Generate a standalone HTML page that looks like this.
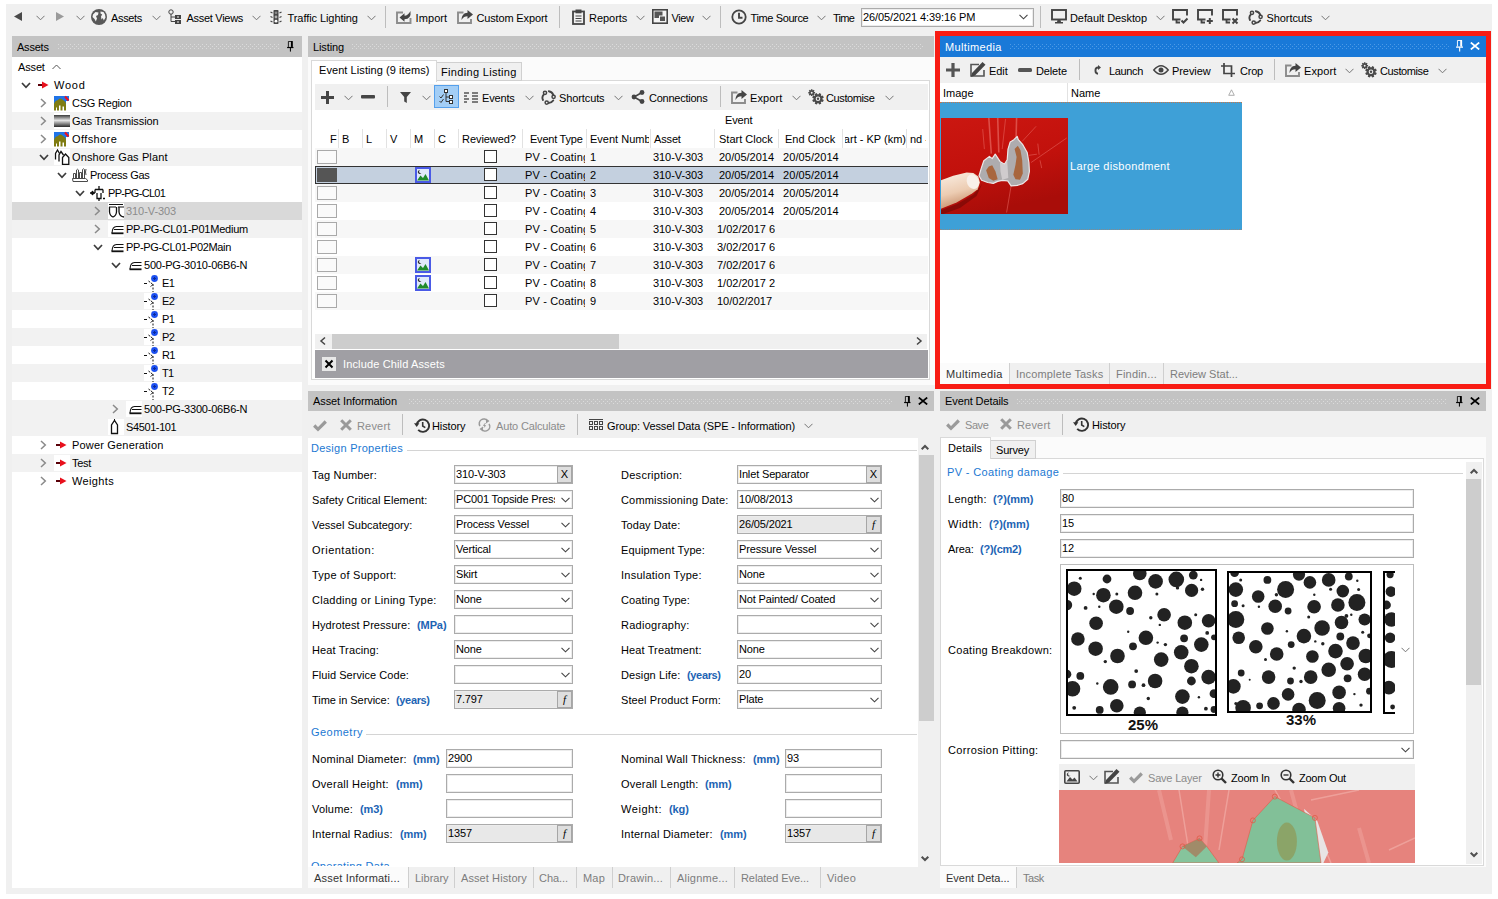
<!DOCTYPE html>
<html lang="en">
<head>
<meta charset="utf-8">
<title>Asset Inspection</title>
<style>
*{box-sizing:border-box;margin:0;padding:0}
html,body{width:1498px;height:899px;overflow:hidden;background:#fff}
body{font-family:"Liberation Sans",sans-serif;font-size:11px;color:#000;position:relative}
#app{position:absolute;left:6px;top:4px;width:1486px;height:890px;background:#f0f0f0}
.t{position:absolute;white-space:nowrap;font-size:11px;line-height:14px;letter-spacing:-.1px;color:#000}
.s{position:absolute;white-space:nowrap;font-size:11px;line-height:16px;letter-spacing:0;color:#000}
svg{position:absolute;overflow:visible}
.b{position:absolute}
.sep{position:absolute;width:1px;background:#bdbdbd}
.hdr{position:absolute;height:21px;background:#c3c3c3}
.inp{position:absolute;height:19px;background:#fff;border:1px solid #ababab;font-size:11px;line-height:17px;padding-left:1px;white-space:nowrap;overflow:hidden;letter-spacing:-.15px;box-shadow:inset 0 0 0 1px #ececec}
.inp.ro{background:#e8e8e8}
.blue{color:#1c64b4;font-weight:bold;font-size:11px}
.grp{color:#1c78d2}
.g{color:#7d7d7d}
</style>
</head>
<body>
<svg width="0" height="0">
<defs>
<pattern id="dp" width="4" height="4" patternUnits="userSpaceOnUse"><rect x="0" y="0" width="1" height="1" fill="#dbdbdb"/><rect x="2" y="2" width="1" height="1" fill="#dbdbdb"/></pattern>
<pattern id="dpb" width="4" height="4" patternUnits="userSpaceOnUse"><rect x="0" y="0" width="1" height="1" fill="#4c9ae6"/><rect x="2" y="2" width="1" height="1" fill="#4c9ae6"/></pattern>
<symbol id="chev" viewBox="0 0 9 6"><path d="M0.500 0.800 L4.500 4.800 L8.500 0.800" fill="none" stroke="#747474" stroke-width="1"/></symbol>
<symbol id="chevd" viewBox="0 0 9 6"><path d="M0.500 0.800 L4.500 4.800 L8.500 0.800" fill="none" stroke="#444" stroke-width="1.100"/></symbol>
<symbol id="tdown" viewBox="0 0 10 7"><path d="M1 1 L5 5.3 L9 1" fill="none" stroke="#3c3c3c" stroke-width="1.7"/></symbol>
<symbol id="tright" viewBox="0 0 7 10"><path d="M1 1 L5.3 5 L1 9" fill="none" stroke="#8a8a8a" stroke-width="1.5"/></symbol>
<symbol id="pin" viewBox="0 0 8 13"><path d="M1.500 7 V0.500 H6 V7" fill="none" stroke="currentColor" stroke-width="1"/><rect x="4.500" y="0" width="2" height="7" fill="currentColor"/><rect x="0" y="7" width="7.500" height="1.400" fill="currentColor"/><rect x="3.300" y="8" width="1.200" height="4.500" fill="currentColor"/></symbol>
<symbol id="xx" viewBox="0 0 10 8"><path d="M0.800 0.500 L9.200 7.500 M9.200 0.500 L0.800 7.500" fill="none" stroke="currentColor" stroke-width="1.700"/></symbol>
<symbol id="gears" viewBox="0 0 16 16"><path d="M13.23 11.14 L15.36 12.02 M11.34 13.03 L12.22 15.16 M8.66 13.03 L7.78 15.16 M6.77 11.14 L4.64 12.02 M6.77 8.46 L4.64 7.58 M8.66 6.57 L7.78 4.44 M11.34 6.57 L12.22 4.44 M13.23 8.46 L15.36 7.58" stroke="#4a4a4a" stroke-width="2.3" fill="none"/><circle cx="10.0" cy="9.8" r="3.4" fill="none" stroke="#4a4a4a" stroke-width="2.2"/><circle cx="10" cy="9.800" r="1.200" fill="#4a4a4a"/><path d="M5.20 3.70 L7.10 3.70 M4.76 4.76 L6.10 6.10 M3.70 5.20 L3.70 7.10 M2.64 4.76 L1.30 6.10 M2.20 3.70 L0.30 3.70 M2.64 2.64 L1.30 1.30 M3.70 2.20 L3.70 0.30 M4.76 2.64 L6.10 1.30" stroke="#4a4a4a" stroke-width="1.5" fill="none"/><circle cx="3.7" cy="3.7" r="1.7" fill="none" stroke="#4a4a4a" stroke-width="1.5"/></symbol>
<symbol id="imgic" viewBox="0 0 16 16"><rect x="1" y="1" width="14" height="14" fill="#dfe9fb" stroke="#4a5ae6" stroke-width="2"/><path d="M2 13.500 L5.500 8.500 L8 11 L10.500 7 L14 13.500 Z" fill="#1f8a2c"/><path d="M5 3 A2 2 0 1 0 6.500 6 A1.600 1.600 0 0 1 5 3 Z" fill="#333"/></symbol>
<symbol id="editic" viewBox="0 0 16 15"><path d="M9 2.500 H1 V14 H14 V8" fill="none" stroke="#555" stroke-width="1.600"/><path d="M12.500 0 L15.500 2.800 L5 13.500 L1 15 L2 11 Z" fill="#444"/></symbol>
<symbol id="histic" viewBox="0 0 16 15"><path d="M2.700 7 A6.200 6.200 0 1 1 4.200 11.800" fill="none" stroke="#333" stroke-width="1.900"/><path d="M0 5.300 H5.400 L2.700 9 Z" fill="#333"/><path d="M8.700 4 V8 L11.300 9.600" fill="none" stroke="#333" stroke-width="1.600"/></symbol>
<symbol id="shortic" viewBox="0 0 15 15"><path d="M2.700 4.600 Q0.500 7 2 10 M12.300 4.800 Q11 1.600 7.800 1.200 M7.500 13 Q10.500 13 12.200 10.500" stroke="#444" stroke-width="1.900" fill="none" stroke-linecap="round"/><circle cx="4" cy="2.800" r="1.600" fill="#f0f0f0" stroke="#444" stroke-width="1.500"/><circle cx="12.600" cy="6.800" r="1.600" fill="#f0f0f0" stroke="#444" stroke-width="1.500"/><circle cx="5.700" cy="12.600" r="1.600" fill="#f0f0f0" stroke="#444" stroke-width="1.500"/></symbol>
</defs>
</svg>
<div id="app"></div>
<!-- top toolbar -->
<svg style="left:14px;top:12px" width="8" height="9" viewBox="0 0 8 9"><path d="M8 0 L0 4.5 L8 9 Z" fill="#4a4a4a"/></svg>
<svg style="left:36px;top:15px" width="9" height="6"><use href="#chev"/></svg>
<svg style="left:56px;top:12px" width="8" height="9" viewBox="0 0 8 9"><path d="M0 0 L8 4.5 L0 9 Z" fill="#9a9a9a"/></svg>
<svg style="left:76px;top:15px" width="9" height="6"><use href="#chev"/></svg>
<svg style="left:91px;top:9px" width="16" height="16" viewBox="0 0 16 16"><circle cx="8" cy="8" r="8" fill="#585858"/><path d="M2 5.500 L4.500 3 L7.500 3.500 L7 6 L5 7 L6 9.500 L4.800 12.500 L3.500 10 L1.500 8 Z M9.500 2.500 L12.500 3 L14 5.500 L14.500 8.500 L12.800 11.500 L11.800 9 L10.500 10.500 L10 7.500 L11.200 5.500 L9.500 4.500 Z" fill="#f4f4f4"/></svg>
<div class="t" style="left:111px;top:11px;letter-spacing:-0.34px">Assets</div>
<svg style="left:152px;top:15px" width="9" height="6"><use href="#chev"/></svg>
<svg style="left:168px;top:9px" width="14" height="15" viewBox="0 0 14 15"><circle cx="3" cy="3" r="2.2" fill="#f0f0f0" stroke="#444" stroke-width="1"/><path d="M3 5 V12.5 H7 M3 8 H7" fill="none" stroke="#444" stroke-width="1"/><rect x="7" y="6" width="6" height="4" fill="#444"/><rect x="7" y="11" width="6" height="4" fill="#444"/><rect x="9" y="7.5" width="2" height="1" fill="#f0f0f0"/><rect x="9" y="12.5" width="2" height="1" fill="#f0f0f0"/></svg>
<div class="t" style="left:186.5px;top:11px;letter-spacing:-0.29px">Asset Views</div>
<svg style="left:252px;top:15px" width="9" height="6"><use href="#chev"/></svg>
<svg style="left:270px;top:10px" width="12" height="14" viewBox="0 0 12 14"><rect x="3.500" y="0" width="5" height="14" rx="0.800" fill="#454545"/><circle cx="6" cy="2.800" r="1.400" fill="#8a8a8a"/><circle cx="6" cy="7" r="1.400" fill="#b0b0b0"/><circle cx="6" cy="11.200" r="1.400" fill="#fff"/><path d="M0.500 2 L2.500 3 M0.500 6.500 L2.500 7.500 M0.500 11 L2.500 12 M11.500 2 L9.500 3 M11.500 6.500 L9.500 7.500 M11.500 11 L9.500 12" stroke="#454545" stroke-width="1.200"/></svg>
<div class="t" style="left:287.5px;top:11px;letter-spacing:-0.07px">Traffic Lighting</div>
<svg style="left:367px;top:15px" width="9" height="6"><use href="#chev"/></svg>
<div class="sep" style="left:385px;top:6px;height:22px"></div>
<svg style="left:396px;top:10px" width="16" height="14" viewBox="0 0 16 14"><path d="M7 2.500 H1 V13 H14.500 V8" fill="none" stroke="#8c8c8c" stroke-width="1.900"/><path d="M3.500 7.500 L8.500 3.200 V5.800 Q12 5.500 14.500 1 Q15.500 9 8.500 9.300 V11.800 Z" fill="#444"/></svg>
<div class="t" style="left:415.5px;top:11px;letter-spacing:0.10px">Import</div>
<svg style="left:457px;top:10px" width="16" height="14" viewBox="0 0 16 14"><path d="M6.500 2.500 H1 V13 H14 V9" fill="none" stroke="#8c8c8c" stroke-width="1.900"/><path d="M16 4.500 L10.500 0 V2.700 C6.500 2.700 4.500 6 4.500 10 C6 7.300 8 6.300 10.500 6.300 V9 Z" fill="#444"/></svg>
<div class="t" style="left:476.4px;top:11px;letter-spacing:-0.14px">Custom Export</div>
<div class="sep" style="left:559px;top:6px;height:22px"></div>
<svg style="left:572px;top:9px" width="13" height="16" viewBox="0 0 13 16"><rect x="1" y="2.500" width="11" height="12.500" fill="none" stroke="#444" stroke-width="1.800"/><rect x="3.500" y="0.500" width="6" height="3.800" fill="#444"/><path d="M3.500 7 H9.500 M3.500 9.500 H9.500 M3.500 12 H9.500" stroke="#444" stroke-width="1.100"/></svg>
<div class="t" style="left:589px;top:11px;letter-spacing:-0.03px">Reports</div>
<svg style="left:636px;top:15px" width="9" height="6"><use href="#chev"/></svg>
<svg style="left:652px;top:9px" width="16" height="15" viewBox="0 0 16 15"><rect x="0.800" y="0.800" width="14.400" height="13.400" fill="#f4f4f4" stroke="#444" stroke-width="1.600"/><rect x="2.500" y="2.500" width="8" height="6.500" fill="#555"/><rect x="7.500" y="7" width="6" height="5.500" fill="#555" stroke="#f4f4f4" stroke-width="1"/></svg>
<div class="t" style="left:671.5px;top:11px;letter-spacing:-0.41px">View</div>
<svg style="left:702px;top:15px" width="9" height="6"><use href="#chev"/></svg>
<div class="sep" style="left:720px;top:6px;height:22px"></div>
<svg style="left:731px;top:9px" width="16" height="16" viewBox="0 0 16 16"><circle cx="8" cy="8" r="6.700" fill="none" stroke="#444" stroke-width="1.800"/><path d="M8 3.800 V8.800 H11.500" fill="none" stroke="#444" stroke-width="1.900"/></svg>
<div class="t" style="left:750.5px;top:11px;letter-spacing:-0.38px">Time Source</div>
<svg style="left:817px;top:15px" width="9" height="6"><use href="#chev"/></svg>
<div class="t" style="left:833px;top:11px;letter-spacing:-0.70px">Time</div>
<div class="inp" style="left:861px;top:8px;width:173px;height:19px;line-height:16px;letter-spacing:-.1px">26/05/2021 4:39:16 PM</div>
<svg style="left:1019px;top:14px" width="9" height="6"><use href="#chevd"/></svg>
<div class="sep" style="left:1040px;top:6px;height:22px"></div>
<svg style="left:1051px;top:9px" width="16" height="15" viewBox="0 0 16 15"><rect x="1" y="1" width="14" height="9.500" fill="none" stroke="#444" stroke-width="1.900"/><path d="M6.500 11 H9.500 L10 13 H12 V14.500 H4 V13 H6 Z" fill="#444"/></svg>
<div class="t" style="left:1070px;top:11px;letter-spacing:-0.09px">Default Desktop</div>
<svg style="left:1156px;top:15px" width="9" height="6"><use href="#chev"/></svg>
<svg style="left:1172px;top:9px" width="16" height="15" viewBox="0 0 16 15"><path d="M8.500 10.500 H1 V1 H15 V6.500" fill="none" stroke="#444" stroke-width="1.900"/><path d="M4.500 11 V13.500 H8" fill="none" stroke="#444" stroke-width="1.800"/><path d="M9.500 11.500 L11.500 13.500 L15.500 9.500" fill="none" stroke="#444" stroke-width="2"/></svg>
<svg style="left:1197px;top:9px" width="16" height="15" viewBox="0 0 16 15"><path d="M8.500 10.500 H1 V1 H15 V6.500" fill="none" stroke="#444" stroke-width="1.900"/><path d="M4.500 11 V13.500 H8" fill="none" stroke="#444" stroke-width="1.800"/><path d="M12.800 9 V15 M9.800 12 H15.800" fill="none" stroke="#444" stroke-width="2"/></svg>
<svg style="left:1222px;top:9px" width="16" height="15" viewBox="0 0 16 15"><path d="M8.500 10.500 H1 V1 H15 V6.500" fill="none" stroke="#444" stroke-width="1.900"/><path d="M4.500 11 V13.500 H8" fill="none" stroke="#444" stroke-width="1.800"/><path d="M10.500 9.500 L15.500 14.500 M15.500 9.500 L10.500 14.500" fill="none" stroke="#444" stroke-width="2"/></svg>
<svg style="left:1248px;top:10px" width="15" height="15"><use href="#shortic"/></svg>
<div class="t" style="left:1266.5px;top:11px;letter-spacing:-0.08px">Shortcuts</div>
<svg style="left:1321px;top:15px" width="9" height="6"><use href="#chev"/></svg>
<!-- assets panel -->
<div class="hdr" style="left:12px;top:36px;width:290px"><div class="t" style="left:5px;top:4px;letter-spacing:-0.22px">Assets</div><svg style="left:46px;top:8px" width="222" height="5"><rect width="222" height="5" fill="url(#dp)"/></svg><svg style="left:275px;top:5px;color:#000" width="7" height="11"><use href="#pin"/></svg></div>
<div class="b" style="left:12px;top:57px;width:290px;height:831px;background:#fff"></div>
<div class="s" style="left:18px;top:59px;letter-spacing:-0.15px">Asset</div>
<svg style="left:52px;top:64px" width="9" height="6" viewBox="0 0 9 6"><path d="M0.500 5 L4.500 1 L8.500 5" fill="none" stroke="#555" stroke-width="1"/></svg>
<svg style="left:21px;top:82px" width="10" height="7"><use href="#tdown"/></svg>
<svg style="left:36px;top:77px" width="16" height="16" viewBox="0 0 16 16"><path d="M2 8 H9" stroke="#5a0008" stroke-width="2"/><path d="M6 4.5 L12.5 8 L6 11.5 Z" fill="#e8101c"/></svg>
<div class="s" style="left:54px;top:77px;letter-spacing:0.76px">Wood</div>
<svg style="left:40px;top:98px" width="7" height="10"><use href="#tright"/></svg>
<svg style="left:54px;top:95px" width="16" height="16" viewBox="0 0 16 16"><rect x="0" y="1" width="15" height="8" fill="#1f74e8"/><rect x="12" y="6" width="4" height="10" fill="#fff"/><path d="M0 15.500 V9 Q1 5.500 4 5 Q6 2.500 8.500 4.500 Q11.500 6 12 9.500 V15.500 H10 V11.500 H8.500 V15.500 H6.500 V10.500 H5 V15.500 H3 V12.500 H2 V15.500 Z" fill="#7f7c12"/><path d="M11 1.500 L14.500 5.500" stroke="#f01020" stroke-width="2"/></svg>
<div class="s" style="left:72px;top:95px;letter-spacing:-0.22px">CSG Region</div>
<div class="b" style="left:12px;top:112px;width:290px;height:18px;background:#f2f2f2"></div>
<svg style="left:40px;top:116px" width="7" height="10"><use href="#tright"/></svg>
<div class="b" style="left:54px;top:113px;width:16px;height:16px;background:#fff"></div>
<svg style="left:54px;top:113px" width="16" height="16" viewBox="0 0 16 16"><defs><linearGradient id="gg" x1="0" y1="0" x2="0" y2="1"><stop offset="0" stop-color="#3a3a3a"/><stop offset=".45" stop-color="#e4e4e4"/><stop offset="1" stop-color="#2a2a2a"/></linearGradient></defs><rect x="0" y="2" width="16" height="12" fill="url(#gg)"/></svg>
<div class="s" style="left:72px;top:113px;letter-spacing:-0.09px">Gas Transmission</div>
<svg style="left:40px;top:134px" width="7" height="10"><use href="#tright"/></svg>
<svg style="left:54px;top:131px" width="16" height="16" viewBox="0 0 16 16"><rect x="0" y="1" width="15" height="8" fill="#1f74e8"/><rect x="12" y="6" width="4" height="10" fill="#fff"/><path d="M0 15.500 V9 Q1 5.500 4 5 Q6 2.500 8.500 4.500 Q11.500 6 12 9.500 V15.500 H10 V11.500 H8.500 V15.500 H6.500 V10.500 H5 V15.500 H3 V12.500 H2 V15.500 Z" fill="#7f7c12"/><path d="M11 1.500 L14.500 5.500" stroke="#f01020" stroke-width="2"/></svg>
<div class="s" style="left:72px;top:131px;letter-spacing:0.40px">Offshore</div>
<div class="b" style="left:12px;top:148px;width:290px;height:18px;background:#f2f2f2"></div>
<svg style="left:39px;top:154px" width="10" height="7"><use href="#tdown"/></svg>
<div class="b" style="left:54px;top:149px;width:16px;height:16px;background:#fff"></div>
<svg style="left:54px;top:149px" width="16" height="16" viewBox="0 0 16 16"><path d="M1.500 10.500 V4.500 L3.500 1 L5.500 4.500" fill="#fff" stroke="#111" stroke-width="1.300"/><path d="M5 12.500 V6 L7 2.500 L9.500 6" fill="#fff" stroke="#111" stroke-width="1.300"/><path d="M8.500 15.300 V8.500 L11.500 5 L14.800 8.500 V15.300 Z" fill="#fff" stroke="#111" stroke-width="1.300"/></svg>
<div class="s" style="left:72px;top:149px;letter-spacing:0.12px">Onshore Gas Plant</div>
<svg style="left:57px;top:172px" width="10" height="7"><use href="#tdown"/></svg>
<svg style="left:72px;top:167px" width="16" height="16" viewBox="0 0 16 16"><path d="M1.500 11 V6.500 H3.500 V11 M4.500 11 V3 Q5.500 1.500 6.500 3 V11 M7.500 11 V5.500 H9.500 V11 M10.500 11 V2.500 Q11.500 1 12.500 2.500 V11 M14 2 Q13 5 14 8 M0.500 11.500 H13.500 L15.500 13 V14.500 H1 Z" fill="none" stroke="#4a4a4a" stroke-width="1"/></svg>
<div class="s" style="left:90px;top:167px;letter-spacing:-0.33px">Process Gas</div>
<svg style="left:75px;top:190px" width="10" height="7"><use href="#tdown"/></svg>
<svg style="left:90px;top:185px" width="16" height="16" viewBox="0 0 16 16"><path d="M0 8 H5 M2.5 6 V10 M5 4.500 H13 M9 1 V4.500 M5 4.500 V8 M13 4.500 V8 M7 8 V13.5 H11 V8 M9 13.5 V16 M13 13.5 H15" fill="none" stroke="#111" stroke-width="1.3"/><path d="M0.500 8 L2.5 5.500 L4.500 8 L2.5 10.5 Z" fill="#111"/></svg>
<div class="s" style="left:108px;top:185px;letter-spacing:-0.70px">PP-PG-CL01</div>
<div class="b" style="left:12px;top:202px;width:290px;height:18px;background:#d9d9d9"></div>
<svg style="left:94px;top:206px" width="7" height="10"><use href="#tright"/></svg>
<div class="b" style="left:108px;top:203px;width:16px;height:16px;background:#fff"></div>
<svg style="left:108px;top:203px" width="16" height="16" viewBox="0 0 16 16"><rect x="0" y="0" width="16" height="16" fill="#fff"/><path d="M1 1.500 H15 M1 4 H8 M10 4 H16" stroke="#111" stroke-width="1.2"/><path d="M1.5 4 V9 Q2 13 5 14 Q8 13 8.500 9 V4" fill="none" stroke="#111" stroke-width="1.3"/><path d="M16 14 Q11.5 13.5 11 9 V4" fill="none" stroke="#111" stroke-width="1.3"/></svg>
<div class="s" style="left:126px;top:203px;color:#8c8c8c;letter-spacing:-0.07px">310-V-303</div>
<div class="b" style="left:12px;top:220px;width:290px;height:18px;background:#f2f2f2"></div>
<svg style="left:94px;top:224px" width="7" height="10"><use href="#tright"/></svg>
<div class="b" style="left:108px;top:221px;width:16px;height:16px;background:#fff"></div>
<svg style="left:108px;top:221px" width="16" height="16" viewBox="0 0 16 16"><path d="M15.500 5.500 H8.500 C5.500 5.500 4.200 8 4 12.300" fill="none" stroke="#111" stroke-width="1.100"/><path d="M6 8.500 H15.500" stroke="#111" stroke-width="1"/><path d="M3.500 12.300 H15.500" stroke="#111" stroke-width="1.800"/></svg>
<div class="s" style="left:126px;top:221px;letter-spacing:-0.23px">PP-PG-CL01-P01Medium</div>
<svg style="left:93px;top:244px" width="10" height="7"><use href="#tdown"/></svg>
<svg style="left:108px;top:239px" width="16" height="16" viewBox="0 0 16 16"><path d="M15.500 5.500 H8.500 C5.500 5.500 4.200 8 4 12.300" fill="none" stroke="#111" stroke-width="1.100"/><path d="M6 8.500 H15.500" stroke="#111" stroke-width="1"/><path d="M3.500 12.300 H15.500" stroke="#111" stroke-width="1.800"/></svg>
<div class="s" style="left:126px;top:239px;letter-spacing:-0.35px">PP-PG-CL01-P02Main</div>
<svg style="left:111px;top:262px" width="10" height="7"><use href="#tdown"/></svg>
<svg style="left:126px;top:257px" width="16" height="16" viewBox="0 0 16 16"><path d="M15.500 5.500 H8.500 C5.500 5.500 4.200 8 4 12.300" fill="none" stroke="#111" stroke-width="1.100"/><path d="M6 8.500 H15.500" stroke="#111" stroke-width="1"/><path d="M3.500 12.300 H15.500" stroke="#111" stroke-width="1.800"/></svg>
<div class="s" style="left:144px;top:257px;letter-spacing:-0.21px">500-PG-3010-06B6-N</div>
<svg style="left:144px;top:275px" width="16" height="16" viewBox="0 0 16 16"><path d="M0 8.500 H3" stroke="#111" stroke-width="1"/><path d="M9 9 V17" stroke="#111" stroke-width="1" stroke-dasharray="2 1.500"/><path d="M4.500 6 L9 9.500 L6 12" fill="none" stroke="#111" stroke-width="1" stroke-dasharray="2 1"/><circle cx="10.5" cy="3.500" r="3.400" fill="#1c50f0"/><path d="M9 3.500 H12 M10.5 2 V5" stroke="#0a2a9a" stroke-width="1"/></svg>
<div class="s" style="left:162px;top:275px;letter-spacing:-0.70px">E1</div>
<div class="b" style="left:12px;top:292px;width:290px;height:18px;background:#f2f2f2"></div>
<div class="b" style="left:144px;top:293px;width:16px;height:16px;background:#fff"></div>
<svg style="left:144px;top:293px" width="16" height="16" viewBox="0 0 16 16"><path d="M0 8.500 H3" stroke="#111" stroke-width="1"/><path d="M9 9 V17" stroke="#111" stroke-width="1" stroke-dasharray="2 1.500"/><path d="M4.500 6 L9 9.500 L6 12" fill="none" stroke="#111" stroke-width="1" stroke-dasharray="2 1"/><circle cx="10.5" cy="3.500" r="3.400" fill="#1c50f0"/><path d="M9 3.500 H12 M10.5 2 V5" stroke="#0a2a9a" stroke-width="1"/></svg>
<div class="s" style="left:162px;top:293px;letter-spacing:-0.70px">E2</div>
<svg style="left:144px;top:311px" width="16" height="16" viewBox="0 0 16 16"><path d="M0 8.500 H3" stroke="#111" stroke-width="1"/><path d="M9 9 V17" stroke="#111" stroke-width="1" stroke-dasharray="2 1.500"/><path d="M4.500 6 L9 9.500 L6 12" fill="none" stroke="#111" stroke-width="1" stroke-dasharray="2 1"/><circle cx="10.5" cy="3.500" r="3.400" fill="#1c50f0"/><path d="M9 3.500 H12 M10.5 2 V5" stroke="#0a2a9a" stroke-width="1"/></svg>
<div class="s" style="left:162px;top:311px;letter-spacing:-0.70px">P1</div>
<div class="b" style="left:12px;top:328px;width:290px;height:18px;background:#f2f2f2"></div>
<div class="b" style="left:144px;top:329px;width:16px;height:16px;background:#fff"></div>
<svg style="left:144px;top:329px" width="16" height="16" viewBox="0 0 16 16"><path d="M0 8.500 H3" stroke="#111" stroke-width="1"/><path d="M9 9 V17" stroke="#111" stroke-width="1" stroke-dasharray="2 1.500"/><path d="M4.500 6 L9 9.500 L6 12" fill="none" stroke="#111" stroke-width="1" stroke-dasharray="2 1"/><circle cx="10.5" cy="3.500" r="3.400" fill="#1c50f0"/><path d="M9 3.500 H12 M10.5 2 V5" stroke="#0a2a9a" stroke-width="1"/></svg>
<div class="s" style="left:162px;top:329px;letter-spacing:-0.70px">P2</div>
<svg style="left:144px;top:347px" width="16" height="16" viewBox="0 0 16 16"><path d="M0 8.500 H3" stroke="#111" stroke-width="1"/><path d="M9 9 V17" stroke="#111" stroke-width="1" stroke-dasharray="2 1.500"/><path d="M4.500 6 L9 9.500 L6 12" fill="none" stroke="#111" stroke-width="1" stroke-dasharray="2 1"/><circle cx="10.5" cy="3.500" r="3.400" fill="#1c50f0"/><path d="M9 3.500 H12 M10.5 2 V5" stroke="#0a2a9a" stroke-width="1"/></svg>
<div class="s" style="left:162px;top:347px;letter-spacing:-0.70px">R1</div>
<div class="b" style="left:12px;top:364px;width:290px;height:18px;background:#f2f2f2"></div>
<div class="b" style="left:144px;top:365px;width:16px;height:16px;background:#fff"></div>
<svg style="left:144px;top:365px" width="16" height="16" viewBox="0 0 16 16"><path d="M0 8.500 H3" stroke="#111" stroke-width="1"/><path d="M9 9 V17" stroke="#111" stroke-width="1" stroke-dasharray="2 1.500"/><path d="M4.500 6 L9 9.500 L6 12" fill="none" stroke="#111" stroke-width="1" stroke-dasharray="2 1"/><circle cx="10.5" cy="3.500" r="3.400" fill="#1c50f0"/><path d="M9 3.500 H12 M10.5 2 V5" stroke="#0a2a9a" stroke-width="1"/></svg>
<div class="s" style="left:162px;top:365px;letter-spacing:-0.70px">T1</div>
<svg style="left:144px;top:383px" width="16" height="16" viewBox="0 0 16 16"><path d="M0 8.500 H3" stroke="#111" stroke-width="1"/><path d="M9 9 V17" stroke="#111" stroke-width="1" stroke-dasharray="2 1.500"/><path d="M4.500 6 L9 9.500 L6 12" fill="none" stroke="#111" stroke-width="1" stroke-dasharray="2 1"/><circle cx="10.5" cy="3.500" r="3.400" fill="#1c50f0"/><path d="M9 3.500 H12 M10.5 2 V5" stroke="#0a2a9a" stroke-width="1"/></svg>
<div class="s" style="left:162px;top:383px;letter-spacing:-0.52px">T2</div>
<div class="b" style="left:12px;top:400px;width:290px;height:18px;background:#f2f2f2"></div>
<svg style="left:112px;top:404px" width="7" height="10"><use href="#tright"/></svg>
<div class="b" style="left:126px;top:401px;width:16px;height:16px;background:#fff"></div>
<svg style="left:126px;top:401px" width="16" height="16" viewBox="0 0 16 16"><path d="M15.500 5.500 H8.500 C5.500 5.500 4.200 8 4 12.300" fill="none" stroke="#111" stroke-width="1.100"/><path d="M6 8.500 H15.500" stroke="#111" stroke-width="1"/><path d="M3.500 12.300 H15.500" stroke="#111" stroke-width="1.800"/></svg>
<div class="s" style="left:144px;top:401px;letter-spacing:-0.21px">500-PG-3300-06B6-N</div>
<div class="b" style="left:12px;top:418px;width:290px;height:18px;background:#f2f2f2"></div>
<div class="b" style="left:108px;top:419px;width:16px;height:16px;background:#fff"></div>
<svg style="left:108px;top:419px" width="16" height="16" viewBox="0 0 16 16"><path d="M3.500 14.500 V6 L6.500 1.500 L9.500 6 V14.500 Z" fill="#fff" stroke="#111" stroke-width="1.3"/><path d="M6.500 0 V2" stroke="#111" stroke-width="1"/></svg>
<div class="s" style="left:126px;top:419px;letter-spacing:-0.39px">S4501-101</div>
<svg style="left:40px;top:440px" width="7" height="10"><use href="#tright"/></svg>
<svg style="left:54px;top:437px" width="16" height="16" viewBox="0 0 16 16"><path d="M2 8 H9" stroke="#5a0008" stroke-width="2"/><path d="M6 4.5 L12.5 8 L6 11.5 Z" fill="#e8101c"/></svg>
<div class="s" style="left:72px;top:437px;letter-spacing:0.18px">Power Generation</div>
<div class="b" style="left:12px;top:454px;width:290px;height:18px;background:#f2f2f2"></div>
<svg style="left:40px;top:458px" width="7" height="10"><use href="#tright"/></svg>
<div class="b" style="left:54px;top:455px;width:16px;height:16px;background:#fff"></div>
<svg style="left:54px;top:455px" width="16" height="16" viewBox="0 0 16 16"><path d="M2 8 H9" stroke="#5a0008" stroke-width="2"/><path d="M6 4.5 L12.5 8 L6 11.5 Z" fill="#e8101c"/></svg>
<div class="s" style="left:72px;top:455px;letter-spacing:-0.25px">Test</div>
<svg style="left:40px;top:476px" width="7" height="10"><use href="#tright"/></svg>
<svg style="left:54px;top:473px" width="16" height="16" viewBox="0 0 16 16"><path d="M2 8 H9" stroke="#5a0008" stroke-width="2"/><path d="M6 4.5 L12.5 8 L6 11.5 Z" fill="#e8101c"/></svg>
<div class="s" style="left:72px;top:473px;letter-spacing:0.35px">Weights</div>
<!-- listing panel -->
<div class="hdr" style="left:308px;top:36px;width:626px"><div class="t" style="left:5px;top:4px">Listing</div><svg style="left:44px;top:8px" width="572" height="5"><rect width="572" height="5" fill="url(#dp)"/></svg></div>
<div class="b" style="left:308px;top:57px;width:627px;height:328px;background:#fbfbfb"></div>
<div class="b" style="left:311px;top:80px;width:619px;height:300px;background:#fff;border:1px solid #d9d9d9"></div>
<div class="b" style="left:436px;top:62px;width:86px;height:19px;background:#f0f0f0;border:1px solid #d0d0d0"></div>
<div class="b" style="left:311px;top:60px;width:126px;height:22px;background:#fff;border:1px solid #d9d9d9;border-bottom:none"></div>
<div class="s" style="left:319px;top:62px;letter-spacing:0.07px">Event Listing (9 items)</div>
<div class="s" style="left:441px;top:64px;letter-spacing:0.32px">Finding Listing</div>
<div class="b" style="left:315px;top:84px;width:613px;height:26px;background:#f0f0f0"></div>
<svg style="left:321px;top:91px" width="13" height="13" viewBox="0 0 13 13"><path d="M6.500 0 V13 M0 6.500 H13" stroke="#454545" stroke-width="3"/></svg>
<svg style="left:344px;top:95px" width="9" height="6"><use href="#chev"/></svg>
<svg style="left:361px;top:95px" width="14" height="4" viewBox="0 0 14 4"><rect width="14" height="3.500" rx="1" fill="#454545"/></svg>
<div class="sep" style="left:387px;top:86px;height:21px"></div>
<svg style="left:400px;top:92px" width="11" height="11" viewBox="0 0 11 11"><path d="M0 0 H11 L6.800 5 V11 L4.200 9.500 V5 Z" fill="#454545"/></svg>
<svg style="left:422px;top:95px" width="9" height="6"><use href="#chev"/></svg>
<div class="b" style="left:434px;top:85px;width:25px;height:23px;background:#a3cef6;border:1px solid #55a0ec"></div>
<svg style="left:439px;top:89px" width="15" height="15" viewBox="0 0 15 15"><path d="M7 3 V12.500 H10 M7 8 H10" fill="none" stroke="#333" stroke-width="1"/><rect x="5.500" y="0.500" width="3" height="3" fill="#fff" stroke="#333"/><rect x="10.500" y="6.500" width="3" height="3" fill="#fff" stroke="#333"/><rect x="10.500" y="11.500" width="3" height="3" fill="#fff" stroke="#333"/><path d="M0.500 7.500 L2 9 L4.500 5.500 M0.500 12 L2 13.500 L4.500 10" fill="none" stroke="#333" stroke-width="1"/></svg>
<svg style="left:464px;top:92px" width="14" height="11" viewBox="0 0 14 11"><path d="M0 1 H5 M0 4 H3 M0 7 H5 M0 10 H3 M8 1 H14 M8 4 H14 M8 7 H14 M8 10 H14" stroke="#555" stroke-width="1.300"/></svg>
<div class="t" style="left:482px;top:91px;letter-spacing:-0.16px">Events</div>
<svg style="left:525px;top:95px" width="9" height="6"><use href="#chev"/></svg>
<svg style="left:541px;top:90px" width="15" height="15"><use href="#shortic"/></svg>
<div class="t" style="left:559px;top:91px;letter-spacing:-0.11px">Shortcuts</div>
<svg style="left:614px;top:95px" width="9" height="6"><use href="#chev"/></svg>
<svg style="left:631px;top:90px" width="14" height="14" viewBox="0 0 14 14"><path d="M11 2.500 L3 7 L11 11.500" fill="none" stroke="#444" stroke-width="1.600"/><circle cx="11" cy="2.500" r="2.400" fill="#444"/><circle cx="3" cy="7" r="2.400" fill="#444"/><circle cx="11" cy="11.500" r="2.400" fill="#444"/></svg>
<div class="t" style="left:649px;top:91px;letter-spacing:-0.24px">Connections</div>
<div class="sep" style="left:720px;top:86px;height:21px"></div>
<svg style="left:731px;top:90px" width="16" height="14" viewBox="0 0 16 14"><path d="M6.500 2.500 H1 V13 H14 V9" fill="none" stroke="#8c8c8c" stroke-width="1.900"/><path d="M16 4.500 L10.500 0 V2.700 C6.500 2.700 4.500 6 4.500 10 C6 7.300 8 6.300 10.500 6.300 V9 Z" fill="#444"/></svg>
<div class="t" style="left:750px;top:91px;letter-spacing:0.11px">Export</div>
<svg style="left:792px;top:95px" width="9" height="6"><use href="#chev"/></svg>
<svg style="left:808px;top:89px" width="16" height="16"><use href="#gears"/></svg>
<div class="t" style="left:826px;top:91px;letter-spacing:-0.39px">Customise</div>
<svg style="left:885px;top:95px" width="9" height="6"><use href="#chev"/></svg>
<div class="s" style="left:725px;top:112px;letter-spacing:-0.17px">Event</div>
<div class="b" style="left:338px;top:129px;width:1px;height:19px;background:#e2e2e2"></div>
<div class="b" style="left:362px;top:129px;width:1px;height:19px;background:#e2e2e2"></div>
<div class="b" style="left:386px;top:129px;width:1px;height:19px;background:#e2e2e2"></div>
<div class="b" style="left:410px;top:129px;width:1px;height:19px;background:#e2e2e2"></div>
<div class="b" style="left:434px;top:129px;width:1px;height:19px;background:#e2e2e2"></div>
<div class="b" style="left:458px;top:129px;width:1px;height:19px;background:#e2e2e2"></div>
<div class="b" style="left:522px;top:129px;width:1px;height:19px;background:#e2e2e2"></div>
<div class="b" style="left:586px;top:129px;width:1px;height:19px;background:#e2e2e2"></div>
<div class="b" style="left:650px;top:129px;width:1px;height:19px;background:#e2e2e2"></div>
<div class="b" style="left:714px;top:129px;width:1px;height:19px;background:#e2e2e2"></div>
<div class="b" style="left:778px;top:129px;width:1px;height:19px;background:#e2e2e2"></div>
<div class="b" style="left:842px;top:129px;width:1px;height:19px;background:#e2e2e2"></div>
<div class="b" style="left:906px;top:129px;width:1px;height:19px;background:#e2e2e2"></div>
<div class="s" style="left:330px;top:131px">F</div>
<div class="s" style="left:342px;top:131px">B</div>
<div class="s" style="left:366px;top:131px">L</div>
<div class="s" style="left:390px;top:131px">V</div>
<div class="s" style="left:414px;top:131px">M</div>
<div class="s" style="left:438px;top:131px">C</div>
<div class="s" style="left:462px;top:131px;letter-spacing:-0.06px">Reviewed?</div>
<div class="s" style="left:530px;top:131px;letter-spacing:-0.23px">Event Type</div>
<div class="s" style="left:654px;top:131px;letter-spacing:-0.15px">Asset</div>
<div class="s" style="left:719px;top:131px">Start Clock</div>
<div class="s" style="left:785px;top:131px">End Clock</div>
<div class="s" style="left:590px;top:131px;width:59px;overflow:hidden">Event Number</div>
<div class="s" style="left:845px;top:131px;width:61px;overflow:hidden;direction:rtl"><span style="direction:ltr;unicode-bidi:bidi-override">Start - KP (km)</span></div>
<div class="s" style="left:910px;top:131px;width:16px;overflow:hidden">nd - KP</div>
<div class="b" style="left:315px;top:148px;width:613px;height:18px;background:#f7f7f7"></div>
<div class="b" style="left:317px;top:150px;width:20px;height:14px;background:#fafafa;border:1px solid #a9a9a9"></div>
<div class="b" style="left:484px;top:150px;width:13px;height:13px;background:#fff;border:1px solid #333"></div>
<div class="s" style="left:525px;top:149px;width:60px;overflow:hidden;letter-spacing:.15px">PV - Coating damage</div>
<div class="s" style="left:590px;top:149px">1</div>
<div class="s" style="left:653px;top:149px;letter-spacing:-0.07px">310-V-303</div>
<div class="s" style="left:719px;top:149px;width:62px;overflow:hidden">20/05/2014</div>
<div class="s" style="left:783px;top:149px;letter-spacing:0.07px">20/05/2014</div>
<div class="b" style="left:315px;top:166px;width:613px;height:18px;background:#c4d0df;border:1px solid #333;border-right:none"></div>
<div class="b" style="left:317px;top:168px;width:20px;height:14px;background:#555;border:1px solid #555"></div>
<svg style="left:415px;top:167px" width="16" height="16"><use href="#imgic"/></svg>
<div class="b" style="left:484px;top:168px;width:13px;height:13px;background:#fff;border:1px solid #333"></div>
<div class="s" style="left:525px;top:167px;width:60px;overflow:hidden;letter-spacing:.15px">PV - Coating damage</div>
<div class="s" style="left:590px;top:167px">2</div>
<div class="s" style="left:653px;top:167px;letter-spacing:-0.07px">310-V-303</div>
<div class="s" style="left:719px;top:167px;width:62px;overflow:hidden">20/05/2014</div>
<div class="s" style="left:783px;top:167px;letter-spacing:0.07px">20/05/2014</div>
<div class="b" style="left:315px;top:184px;width:613px;height:18px;background:#f7f7f7"></div>
<div class="b" style="left:317px;top:186px;width:20px;height:14px;background:#fafafa;border:1px solid #a9a9a9"></div>
<div class="b" style="left:484px;top:186px;width:13px;height:13px;background:#fff;border:1px solid #333"></div>
<div class="s" style="left:525px;top:185px;width:60px;overflow:hidden;letter-spacing:.15px">PV - Coating damage</div>
<div class="s" style="left:590px;top:185px">3</div>
<div class="s" style="left:653px;top:185px;letter-spacing:-0.07px">310-V-303</div>
<div class="s" style="left:719px;top:185px;width:62px;overflow:hidden">20/05/2014</div>
<div class="s" style="left:783px;top:185px;letter-spacing:0.07px">20/05/2014</div>
<div class="b" style="left:317px;top:204px;width:20px;height:14px;background:#fafafa;border:1px solid #a9a9a9"></div>
<div class="b" style="left:484px;top:204px;width:13px;height:13px;background:#fff;border:1px solid #333"></div>
<div class="s" style="left:525px;top:203px;width:60px;overflow:hidden;letter-spacing:.15px">PV - Coating damage</div>
<div class="s" style="left:590px;top:203px">4</div>
<div class="s" style="left:653px;top:203px;letter-spacing:-0.07px">310-V-303</div>
<div class="s" style="left:719px;top:203px;width:62px;overflow:hidden">20/05/2014</div>
<div class="s" style="left:783px;top:203px;letter-spacing:0.07px">20/05/2014</div>
<div class="b" style="left:315px;top:220px;width:613px;height:18px;background:#f7f7f7"></div>
<div class="b" style="left:317px;top:222px;width:20px;height:14px;background:#fafafa;border:1px solid #a9a9a9"></div>
<div class="b" style="left:484px;top:222px;width:13px;height:13px;background:#fff;border:1px solid #333"></div>
<div class="s" style="left:525px;top:221px;width:60px;overflow:hidden;letter-spacing:.15px">PV - Coating damage</div>
<div class="s" style="left:590px;top:221px">5</div>
<div class="s" style="left:653px;top:221px;letter-spacing:-0.07px">310-V-303</div>
<div class="s" style="left:717px;top:221px;width:58px;overflow:hidden">1/02/2017 6:00</div>
<div class="b" style="left:317px;top:240px;width:20px;height:14px;background:#fafafa;border:1px solid #a9a9a9"></div>
<div class="b" style="left:484px;top:240px;width:13px;height:13px;background:#fff;border:1px solid #333"></div>
<div class="s" style="left:525px;top:239px;width:60px;overflow:hidden;letter-spacing:.15px">PV - Coating damage</div>
<div class="s" style="left:590px;top:239px">6</div>
<div class="s" style="left:653px;top:239px;letter-spacing:-0.07px">310-V-303</div>
<div class="s" style="left:717px;top:239px;width:58px;overflow:hidden">3/02/2017 6:00</div>
<div class="b" style="left:315px;top:256px;width:613px;height:18px;background:#f7f7f7"></div>
<div class="b" style="left:317px;top:258px;width:20px;height:14px;background:#fafafa;border:1px solid #a9a9a9"></div>
<svg style="left:415px;top:257px" width="16" height="16"><use href="#imgic"/></svg>
<div class="b" style="left:484px;top:258px;width:13px;height:13px;background:#fff;border:1px solid #333"></div>
<div class="s" style="left:525px;top:257px;width:60px;overflow:hidden;letter-spacing:.15px">PV - Coating damage</div>
<div class="s" style="left:590px;top:257px">7</div>
<div class="s" style="left:653px;top:257px;letter-spacing:-0.07px">310-V-303</div>
<div class="s" style="left:717px;top:257px;width:58px;overflow:hidden">7/02/2017 6:00</div>
<div class="b" style="left:317px;top:276px;width:20px;height:14px;background:#fafafa;border:1px solid #a9a9a9"></div>
<svg style="left:415px;top:275px" width="16" height="16"><use href="#imgic"/></svg>
<div class="b" style="left:484px;top:276px;width:13px;height:13px;background:#fff;border:1px solid #333"></div>
<div class="s" style="left:525px;top:275px;width:60px;overflow:hidden;letter-spacing:.15px">PV - Coating damage</div>
<div class="s" style="left:590px;top:275px">8</div>
<div class="s" style="left:653px;top:275px;letter-spacing:-0.07px">310-V-303</div>
<div class="s" style="left:717px;top:275px;width:58px;overflow:hidden">1/02/2017 2:00</div>
<div class="b" style="left:315px;top:292px;width:613px;height:18px;background:#f7f7f7"></div>
<div class="b" style="left:317px;top:294px;width:20px;height:14px;background:#fafafa;border:1px solid #a9a9a9"></div>
<div class="b" style="left:484px;top:294px;width:13px;height:13px;background:#fff;border:1px solid #333"></div>
<div class="s" style="left:525px;top:293px;width:60px;overflow:hidden;letter-spacing:.15px">PV - Coating damage</div>
<div class="s" style="left:590px;top:293px">9</div>
<div class="s" style="left:653px;top:293px;letter-spacing:-0.07px">310-V-303</div>
<div class="s" style="left:717px;top:293px;width:62px;overflow:hidden">10/02/2017</div>
<div class="b" style="left:315px;top:334px;width:612px;height:15px;background:#f0f0f0"></div>
<div class="b" style="left:332px;top:334px;width:287px;height:15px;background:#cdcdcd"></div>
<svg style="left:320px;top:337px" width="6" height="8" viewBox="0 0 6 8"><path d="M5 0.500 L1 4 L5 7.500" fill="none" stroke="#444" stroke-width="1.500"/></svg>
<svg style="left:916px;top:337px" width="6" height="8" viewBox="0 0 6 8"><path d="M1 0.500 L5 4 L1 7.500" fill="none" stroke="#444" stroke-width="1.500"/></svg>
<div class="b" style="left:315px;top:350px;width:613px;height:28px;background:#a09fa4"></div>
<div class="b" style="left:322px;top:357px;width:14px;height:14px;background:#e8e8e8"></div>
<svg style="left:325px;top:360px" width="8" height="8" viewBox="0 0 8 8"><path d="M0.500 0.500 L7.500 7.500 M7.500 0.500 L0.500 7.500" stroke="#000" stroke-width="2"/></svg>
<div class="s" style="left:343px;top:356px;color:#fff;letter-spacing:0.14px">Include Child Assets</div>
<!-- multimedia panel -->
<div class="b" style="left:935px;top:31px;width:556px;height:358px;background:#fff;border:5px solid #f81c14"></div>
<div class="b" style="left:940px;top:36px;width:546px;height:21px;background:#1979d8"></div>
<div class="t" style="left:945px;top:40px;color:#fff;letter-spacing:.35px">Multimedia</div>
<svg style="left:1010px;top:44px" width="440" height="5"><rect width="440" height="5" fill="url(#dpb)"/></svg>
<svg style="left:1456px;top:40px;color:#fff" width="7.500" height="12"><use href="#pin"/></svg>
<svg style="left:1470px;top:42px;color:#fff" width="10" height="8"><use href="#xx"/></svg>
<div class="b" style="left:940px;top:57px;width:546px;height:26px;background:#f0f0f0"></div>
<svg style="left:946px;top:63px" width="14" height="14" viewBox="0 0 14 14"><path d="M7 0 V14 M0 7 H14" stroke="#555" stroke-width="3.200"/></svg>
<svg style="left:970px;top:62px" width="16" height="15"><use href="#editic"/></svg>
<div class="t" style="left:989px;top:64px;letter-spacing:-0.04px">Edit</div>
<svg style="left:1018px;top:68px" width="14" height="4" viewBox="0 0 14 4"><rect width="14" height="4" rx="1.500" fill="#555"/></svg>
<div class="t" style="left:1036px;top:64px;letter-spacing:-0.14px">Delete</div>
<div class="sep" style="left:1079px;top:59px;height:21px"></div>
<svg style="left:1094px;top:65px" width="7" height="10" viewBox="0 0 7 10"><path d="M5 2.500 H4 Q1.500 2.500 1.500 5 V6 Q1.500 8.500 4 8.800" fill="none" stroke="#444" stroke-width="1.900"/><path d="M4 0 L7 2.500 L4 5 Z" fill="#444"/></svg>
<div class="t" style="left:1109px;top:64px;letter-spacing:-0.35px">Launch</div>
<svg style="left:1153px;top:65px" width="16" height="10" viewBox="0 0 16 10"><path d="M0.800 5 Q8 -3.500 15.200 5 Q8 13.500 0.800 5 Z" fill="none" stroke="#444" stroke-width="1.500"/><circle cx="8" cy="5" r="2.500" fill="#444"/></svg>
<div class="t" style="left:1172px;top:64px;letter-spacing:-0.07px">Preview</div>
<svg style="left:1221px;top:63px" width="14" height="14" viewBox="0 0 14 14"><path d="M3 0 V10.500 H14 M0 3 H10.500 V14" fill="none" stroke="#444" stroke-width="1.700"/></svg>
<div class="t" style="left:1240px;top:64px;letter-spacing:-0.21px">Crop</div>
<div class="sep" style="left:1274px;top:59px;height:21px"></div>
<svg style="left:1285px;top:63px" width="16" height="14" viewBox="0 0 16 14"><path d="M6.500 2.500 H1 V13 H14 V9" fill="none" stroke="#8c8c8c" stroke-width="1.900"/><path d="M16 4.500 L10.500 0 V2.700 C6.500 2.700 4.500 6 4.500 10 C6 7.300 8 6.300 10.500 6.300 V9 Z" fill="#444"/></svg>
<div class="t" style="left:1304px;top:64px;letter-spacing:0.11px">Export</div>
<svg style="left:1345px;top:68px" width="9" height="6"><use href="#chev"/></svg>
<svg style="left:1361px;top:62px" width="16" height="16"><use href="#gears"/></svg>
<div class="t" style="left:1380px;top:64px;letter-spacing:-0.39px">Customise</div>
<svg style="left:1438px;top:68px" width="9" height="6"><use href="#chev"/></svg>
<div class="s" style="left:943px;top:85px">Image</div>
<div class="b" style="left:1067px;top:83px;width:1px;height:19px;background:#e2e2e2"></div>
<div class="s" style="left:1071px;top:85px">Name</div>
<svg style="left:1228px;top:89px" width="7" height="7" viewBox="0 0 7 7"><path d="M3.500 0.800 L6.300 6.300 H0.700 Z" fill="none" stroke="#999" stroke-width="0.800"/></svg>
<div class="b" style="left:940px;top:102px;width:302px;height:128px;background:#3ea0d7;border-top:1px dotted #c87848;border-bottom:1px dotted #8a8a8a"></div>
<svg style="left:941px;top:118px;overflow:hidden" width="127" height="96" viewBox="0 0 127 96">
<defs><linearGradient id="rg" x1="0" y1="0" x2="0.300" y2="1"><stop offset="0" stop-color="#cb1711"/><stop offset=".55" stop-color="#c2110c"/><stop offset="1" stop-color="#a90d09"/></linearGradient><linearGradient id="fg" x1="0" y1="0" x2="0.300" y2="1"><stop offset="0" stop-color="#fbf0e6"/><stop offset=".6" stop-color="#ecccb2"/><stop offset="1" stop-color="#c8906c"/></linearGradient></defs>
<rect width="127" height="96" fill="url(#rg)"/>
<polygon points="0.0,92.3 16.7,85.7 32.3,76.8 38.9,69.0 41.2,65.6 35.6,77.9 18.9,90.1 0.0,96.8" fill="#6a0705" opacity=".55"/>
<g stroke="#e4615a" fill="none" opacity=".75"><path d="M47.8 0.0 L50.3 35.6 M56.7 0.0 L57.8 34.5 M75.6 0.0 L75.1 18.9" stroke-width="1.600"/><path d="M81.2 23.4 L95.1 8.3 M96.8 25.6 L98.1 36.7 M87.9 37.3 L95.9 36.2 M70.1 67.9 L65.6 94.5 M41.7 11.1 L43.4 31.1 M64.5 1.1 L61.2 31.1 M99.0 42.3 L100.7 50.1 M125.7 20.0 L90.1 44.5" stroke-width="0.800"/></g>
<polygon points="38.0,57.8 40.3,50.1 42.8,42.8 48.4,38.4 51.2,40.6 54.2,36.2 59.0,43.4 63.4,46.2 66.2,41.7 67.0,31.1 69.2,23.9 72.9,21.7 76.2,18.4 77.3,21.7 81.8,26.7 86.2,34.5 87.9,44.5 88.4,53.4 86.8,61.2 81.8,65.6 76.8,67.3 70.1,67.9 66.7,62.8 61.2,62.3 56.7,63.4 52.3,65.4 46.7,64.5 40.6,62.3" fill="#aeacae" stroke="#ece8e8" stroke-width="1.200" stroke-linejoin="round"/>
<polygon points="59.0,44.5 63.4,46.7 66.2,42.3 67.3,60.1 61.2,61.7 59.5,53.4" fill="#d8d4d6" opacity=".8"/>
<polygon points="45.1,52.3 47.8,48.4 51.2,47.3 54.5,53.4 56.7,61.2 52.3,62.8 47.8,60.1" fill="#a8663e"/>
<polygon points="73.6,31.1 76.8,27.8 79.5,32.3 81.2,42.3 81.8,55.6 79.0,61.7 74.5,61.2 72.3,56.7 74.5,46.7 75.6,38.9" fill="#a8663e"/>
<polygon points="0.0,62.3 12.2,57.8 25.6,54.5 32.3,55.1 37.3,58.4 38.9,64.5 36.7,71.2 31.1,75.6 15.6,84.5 0.0,90.7" fill="url(#fg)"/>
<ellipse cx="31.9" cy="63.6" rx="6" ry="7.500" fill="#f8f0ea" transform="rotate(-25 31.9 63.6)"/>
</svg>
<div class="s" style="left:1070px;top:158px;color:#fff;letter-spacing:0.34px">Large disbondment</div>
<div class="b" style="left:940px;top:363px;width:546px;height:21px;background:#f0f0f0"></div>
<div class="b" style="left:940px;top:363px;width:69px;height:21px;background:#fbfbfb"></div>
<div class="s" style="left:946px;top:366px;color:#333;letter-spacing:0.36px">Multimedia</div>
<div class="b" style="left:1009px;top:363px;width:1px;height:21px;background:#cfcfcf"></div>
<div class="s g" style="left:1016px;top:366px;letter-spacing:0.16px">Incomplete Tasks</div>
<div class="b" style="left:1109px;top:363px;width:1px;height:21px;background:#cfcfcf"></div>
<div class="s g" style="left:1116px;top:366px;letter-spacing:0.20px">Findin...</div>
<div class="b" style="left:1163px;top:363px;width:1px;height:21px;background:#cfcfcf"></div>
<div class="s g" style="left:1170px;top:366px">Review Stat...</div>
<!-- asset information panel -->
<div class="hdr" style="left:308px;top:391px;width:626px;height:20px"><div class="t" style="left:5px;top:3px">Asset Information</div><svg style="left:101px;top:8px" width="484" height="5"><rect width="484" height="5" fill="url(#dp)"/></svg><svg style="left:596px;top:5px;color:#000" width="7" height="11"><use href="#pin"/></svg><svg style="left:610px;top:6px;color:#000" width="10" height="8"><use href="#xx"/></svg></div>
<svg style="left:313px;top:420px" width="14" height="11" viewBox="0 0 14 11"><path d="M1.200 5.500 L5 9.300 L12.800 1.500" fill="none" stroke="#9a9a9a" stroke-width="3.200"/></svg>
<svg style="left:340px;top:419px" width="12" height="12" viewBox="0 0 12 12"><path d="M1.200 1.200 L10.800 10.800 M10.800 1.200 L1.200 10.800" stroke="#9a9a9a" stroke-width="3"/></svg>
<div class="t g" style="left:357px;top:419px;color:#8c8c8c;letter-spacing:0.18px">Revert</div>
<div class="sep" style="left:402px;top:414px;height:21px"></div>
<svg style="left:414px;top:418px" width="16" height="15"><use href="#histic"/></svg>
<div class="t" style="left:432px;top:419px;letter-spacing:-0.10px">History</div>
<svg style="left:478px;top:418px" width="13" height="14" viewBox="0 0 13 14"><path d="M2 8 A4.500 4.500 0 0 1 9.500 3 M11 6 A4.500 4.500 0 0 1 3.500 11" fill="none" stroke="#9a9a9a" stroke-width="1.500"/><path d="M8 0.500 L11.500 3 L8 5.500 Z M5 8.500 L1.500 11 L5 13.500 Z" fill="#9a9a9a"/><path d="M7.500 5 L5.500 7.500 H7.500 L6 9.500" fill="none" stroke="#9a9a9a" stroke-width="1"/></svg>
<div class="t" style="left:496px;top:419px;color:#8c8c8c;letter-spacing:-0.16px">Auto Calculate</div>
<div class="sep" style="left:577px;top:414px;height:21px"></div>
<svg style="left:589px;top:419px" width="14" height="11" viewBox="0 0 14 11"><path d="M0 0.500 H14" stroke="#444" stroke-width="1"/><rect x="0.500" y="2.500" width="3" height="3" fill="none" stroke="#444"/><rect x="5.500" y="2.500" width="3" height="3" fill="none" stroke="#444"/><rect x="10.500" y="2.500" width="3" height="3" fill="none" stroke="#444"/><rect x="0.500" y="7.500" width="3" height="3" fill="none" stroke="#444"/><rect x="5.500" y="7.500" width="3" height="3" fill="none" stroke="#444"/><rect x="10.500" y="7.500" width="3" height="3" fill="none" stroke="#444"/></svg>
<div class="t" style="left:607px;top:419px;letter-spacing:-0.12px">Group: Vessel Data (SPE - Information)</div>
<svg style="left:804px;top:423px" width="9" height="6"><use href="#chev"/></svg>
<div class="b" style="left:308px;top:438px;width:626px;height:429px;background:#fff"></div>
<div class="b" style="left:918px;top:438px;width:16px;height:429px;background:#f0f0f0"></div>
<div class="b" style="left:919px;top:455px;width:15px;height:266px;background:#cdcdcd"></div>
<svg style="left:921px;top:444px" width="8" height="6" viewBox="0 0 8 6"><path d="M0.700 5.300 L4 2 L7.300 5.300" fill="none" stroke="#505050" stroke-width="2"/></svg>
<svg style="left:921px;top:856px" width="8" height="6" viewBox="0 0 8 6"><path d="M0.700 0.700 L4 4 L7.300 0.700" fill="none" stroke="#505050" stroke-width="2"/></svg>
<div class="s grp" style="left:311px;top:440px;letter-spacing:0.27px">Design Properties</div>
<div class="b" style="left:407px;top:450px;width:510px;height:1px;background:#d4d4d4"></div>
<div class="s" style="left:312px;top:467px;letter-spacing:0.18px">Tag Number:</div>
<div class="inp" style="left:454px;top:465px;width:119px"><div style="width:99px;overflow:hidden">310-V-303</div></div>
<div class="b" style="left:557px;top:466px;width:15px;height:17px;background:#dedede;border:1px solid #a6a6a6;font-size:11px;line-height:15px;text-align:center">X</div>
<div class="s" style="left:621px;top:467px;letter-spacing:0.28px">Description:</div>
<div class="inp" style="left:737px;top:465px;width:145px"><div style="width:125px;overflow:hidden">Inlet Separator</div></div>
<div class="b" style="left:866px;top:466px;width:15px;height:17px;background:#dedede;border:1px solid #a6a6a6;font-size:11px;line-height:15px;text-align:center">X</div>
<div class="s" style="left:312px;top:492px;letter-spacing:0.04px">Safety Critical Element:</div>
<div class="inp" style="left:454px;top:490px;width:119px"><div style="width:99px;overflow:hidden">PC001 Topside Pressure</div></div>
<svg style="left:561px;top:497px" width="9" height="6"><use href="#chevd"/></svg>
<div class="s" style="left:621px;top:492px;letter-spacing:0.16px">Commissioning Date:</div>
<div class="inp" style="left:737px;top:490px;width:145px"><div style="width:125px;overflow:hidden">10/08/2013</div></div>
<svg style="left:870px;top:497px" width="9" height="6"><use href="#chevd"/></svg>
<div class="s" style="left:312px;top:517px">Vessel Subcategory:</div>
<div class="inp" style="left:454px;top:515px;width:119px"><div style="width:99px;overflow:hidden">Process Vessel</div></div>
<svg style="left:561px;top:522px" width="9" height="6"><use href="#chevd"/></svg>
<div class="s" style="left:621px;top:517px;letter-spacing:0.05px">Today Date:</div>
<div class="inp ro" style="left:737px;top:515px;width:145px"><div style="width:125px;overflow:hidden">26/05/2021</div></div>
<div class="b" style="left:866px;top:516px;width:15px;height:17px;background:#dedede;border:1px solid #a6a6a6;font-size:11px;line-height:15px;text-align:center;font-style:italic;font-family:'Liberation Serif',serif">f</div>
<div class="s" style="left:312px;top:542px;letter-spacing:0.49px">Orientation:</div>
<div class="inp" style="left:454px;top:540px;width:119px"><div style="width:99px;overflow:hidden">Vertical</div></div>
<svg style="left:561px;top:547px" width="9" height="6"><use href="#chevd"/></svg>
<div class="s" style="left:621px;top:542px;letter-spacing:0.11px">Equipment Type:</div>
<div class="inp" style="left:737px;top:540px;width:145px"><div style="width:125px;overflow:hidden">Pressure Vessel</div></div>
<svg style="left:870px;top:547px" width="9" height="6"><use href="#chevd"/></svg>
<div class="s" style="left:312px;top:567px;letter-spacing:0.24px">Type of Support:</div>
<div class="inp" style="left:454px;top:565px;width:119px"><div style="width:99px;overflow:hidden">Skirt</div></div>
<svg style="left:561px;top:572px" width="9" height="6"><use href="#chevd"/></svg>
<div class="s" style="left:621px;top:567px;letter-spacing:0.24px">Insulation Type:</div>
<div class="inp" style="left:737px;top:565px;width:145px"><div style="width:125px;overflow:hidden">None</div></div>
<svg style="left:870px;top:572px" width="9" height="6"><use href="#chevd"/></svg>
<div class="s" style="left:312px;top:592px;letter-spacing:0.26px">Cladding or Lining Type:</div>
<div class="inp" style="left:454px;top:590px;width:119px"><div style="width:99px;overflow:hidden">None</div></div>
<svg style="left:561px;top:597px" width="9" height="6"><use href="#chevd"/></svg>
<div class="s" style="left:621px;top:592px;letter-spacing:0.10px">Coating Type:</div>
<div class="inp" style="left:737px;top:590px;width:145px"><div style="width:125px;overflow:hidden">Not Painted/ Coated</div></div>
<svg style="left:870px;top:597px" width="9" height="6"><use href="#chevd"/></svg>
<div class="s" style="left:312px;top:617px;letter-spacing:0.06px">Hydrotest Pressure:</div>
<div class="t blue" style="left:417px;top:618px">(MPa)</div>
<div class="inp" style="left:454px;top:615px;width:119px"><div style="width:115px;overflow:hidden"></div></div>
<div class="s" style="left:621px;top:617px;letter-spacing:0.27px">Radiography:</div>
<div class="inp" style="left:737px;top:615px;width:145px"><div style="width:125px;overflow:hidden"></div></div>
<svg style="left:870px;top:622px" width="9" height="6"><use href="#chevd"/></svg>
<div class="s" style="left:312px;top:642px;letter-spacing:0.12px">Heat Tracing:</div>
<div class="inp" style="left:454px;top:640px;width:119px"><div style="width:99px;overflow:hidden">None</div></div>
<svg style="left:561px;top:647px" width="9" height="6"><use href="#chevd"/></svg>
<div class="s" style="left:621px;top:642px;letter-spacing:0.12px">Heat Treatment:</div>
<div class="inp" style="left:737px;top:640px;width:145px"><div style="width:125px;overflow:hidden">None</div></div>
<svg style="left:870px;top:647px" width="9" height="6"><use href="#chevd"/></svg>
<div class="s" style="left:312px;top:667px;letter-spacing:0.05px">Fluid Service Code:</div>
<div class="inp" style="left:454px;top:665px;width:119px"><div style="width:99px;overflow:hidden"></div></div>
<svg style="left:561px;top:672px" width="9" height="6"><use href="#chevd"/></svg>
<div class="s" style="left:621px;top:667px;letter-spacing:0.10px">Design Life:</div>
<div class="t blue" style="left:687px;top:668px;letter-spacing:-0.34px">(years)</div>
<div class="inp" style="left:737px;top:665px;width:145px"><div style="width:141px;overflow:hidden">20</div></div>
<div class="s" style="left:312px;top:692px;letter-spacing:-0.05px">Time in Service:</div>
<div class="t blue" style="left:396px;top:693px;letter-spacing:-0.34px">(years)</div>
<div class="inp ro" style="left:454px;top:690px;width:119px"><div style="width:99px;overflow:hidden">7.797</div></div>
<div class="b" style="left:557px;top:691px;width:15px;height:17px;background:#dedede;border:1px solid #a6a6a6;font-size:11px;line-height:15px;text-align:center;font-style:italic;font-family:'Liberation Serif',serif">f</div>
<div class="s" style="left:621px;top:692px;letter-spacing:0.11px">Steel Product Form:</div>
<div class="inp" style="left:737px;top:690px;width:145px"><div style="width:125px;overflow:hidden">Plate</div></div>
<svg style="left:870px;top:697px" width="9" height="6"><use href="#chevd"/></svg>
<div class="s grp" style="left:311px;top:724px;letter-spacing:0.46px">Geometry</div>
<div class="b" style="left:366px;top:734px;width:551px;height:1px;background:#d4d4d4"></div>
<div class="s" style="left:312px;top:751px;letter-spacing:0.22px">Nominal Diameter:</div>
<div class="t blue" style="left:413px;top:752px">(mm)</div>
<div class="inp" style="left:446px;top:749px;width:127px"><div style="width:123px;overflow:hidden">2900</div></div>
<div class="s" style="left:621px;top:751px;letter-spacing:0.21px">Nominal Wall Thickness:</div>
<div class="t blue" style="left:753px;top:752px">(mm)</div>
<div class="inp" style="left:785px;top:749px;width:97px"><div style="width:93px;overflow:hidden">93</div></div>
<div class="s" style="left:312px;top:776px;letter-spacing:0.27px">Overall Height:</div>
<div class="t blue" style="left:396px;top:777px">(mm)</div>
<div class="inp" style="left:446px;top:774px;width:127px"><div style="width:123px;overflow:hidden"></div></div>
<div class="s" style="left:621px;top:776px;letter-spacing:0.20px">Overall Length:</div>
<div class="t blue" style="left:705px;top:777px">(mm)</div>
<div class="inp" style="left:785px;top:774px;width:97px"><div style="width:93px;overflow:hidden"></div></div>
<div class="s" style="left:312px;top:801px;letter-spacing:0.18px">Volume:</div>
<div class="t blue" style="left:360px;top:802px">(m3)</div>
<div class="inp" style="left:446px;top:799px;width:127px"><div style="width:123px;overflow:hidden"></div></div>
<div class="s" style="left:621px;top:801px;letter-spacing:0.56px">Weight:</div>
<div class="t blue" style="left:669px;top:802px">(kg)</div>
<div class="inp" style="left:785px;top:799px;width:97px"><div style="width:93px;overflow:hidden"></div></div>
<div class="s" style="left:312px;top:826px;letter-spacing:0.23px">Internal Radius:</div>
<div class="t blue" style="left:400px;top:827px">(mm)</div>
<div class="inp ro" style="left:446px;top:824px;width:127px"><div style="width:107px;overflow:hidden">1357</div></div>
<div class="b" style="left:557px;top:825px;width:15px;height:17px;background:#dedede;border:1px solid #a6a6a6;font-size:11px;line-height:15px;text-align:center;font-style:italic;font-family:'Liberation Serif',serif">f</div>
<div class="s" style="left:621px;top:826px;letter-spacing:0.24px">Internal Diameter:</div>
<div class="t blue" style="left:720px;top:827px">(mm)</div>
<div class="inp ro" style="left:785px;top:824px;width:97px"><div style="width:77px;overflow:hidden">1357</div></div>
<div class="b" style="left:866px;top:825px;width:15px;height:17px;background:#dedede;border:1px solid #a6a6a6;font-size:11px;line-height:15px;text-align:center;font-style:italic;font-family:'Liberation Serif',serif">f</div>
<div class="b" style="left:308px;top:856px;width:609px;height:10px;overflow:hidden"><div class="s grp" style="left:3px;top:2px;letter-spacing:0.31px">Operating Data</div></div>
<div class="b" style="left:308px;top:867px;width:100px;height:21px;background:#fbfbfb"></div>
<div class="s" style="left:314px;top:870px;color:#333;letter-spacing:0.19px">Asset Informati...</div>
<div class="s g" style="left:415px;top:870px">Library</div>
<div class="s g" style="left:461px;top:870px;letter-spacing:0.09px">Asset History</div>
<div class="s g" style="left:539px;top:870px;letter-spacing:-0.06px">Cha...</div>
<div class="s g" style="left:583px;top:870px;letter-spacing:0.20px">Map</div>
<div class="s g" style="left:618px;top:870px;letter-spacing:0.18px">Drawin...</div>
<div class="s g" style="left:677px;top:870px;letter-spacing:0.21px">Alignme...</div>
<div class="s g" style="left:741px;top:870px;letter-spacing:-0.08px">Related Eve...</div>
<div class="s g" style="left:827px;top:870px;letter-spacing:0.21px">Video</div>
<div class="b" style="left:408px;top:867px;width:1px;height:21px;background:#cfcfcf"></div>
<div class="b" style="left:454px;top:867px;width:1px;height:21px;background:#cfcfcf"></div>
<div class="b" style="left:533px;top:867px;width:1px;height:21px;background:#cfcfcf"></div>
<div class="b" style="left:576px;top:867px;width:1px;height:21px;background:#cfcfcf"></div>
<div class="b" style="left:612px;top:867px;width:1px;height:21px;background:#cfcfcf"></div>
<div class="b" style="left:670px;top:867px;width:1px;height:21px;background:#cfcfcf"></div>
<div class="b" style="left:734px;top:867px;width:1px;height:21px;background:#cfcfcf"></div>
<div class="b" style="left:820px;top:867px;width:1px;height:21px;background:#cfcfcf"></div>
<!-- event details panel -->
<div class="hdr" style="left:940px;top:391px;width:546px;height:20px"><div class="t" style="left:5px;top:3px">Event Details</div><svg style="left:77px;top:8px" width="430" height="5"><rect width="430" height="5" fill="url(#dp)"/></svg><svg style="left:516px;top:5px;color:#000" width="7" height="11"><use href="#pin"/></svg><svg style="left:530px;top:6px;color:#000" width="10" height="8"><use href="#xx"/></svg></div>
<svg style="left:946px;top:419px" width="14" height="11" viewBox="0 0 14 11"><path d="M1.200 5.500 L5 9.300 L12.800 1.500" fill="none" stroke="#9a9a9a" stroke-width="3.200"/></svg>
<div class="t" style="left:965px;top:418px;color:#8c8c8c;letter-spacing:-0.42px">Save</div>
<svg style="left:1000px;top:418px" width="12" height="12" viewBox="0 0 12 12"><path d="M1.200 1.200 L10.800 10.800 M10.800 1.200 L1.200 10.800" stroke="#9a9a9a" stroke-width="3"/></svg>
<div class="t" style="left:1017px;top:418px;color:#8c8c8c;letter-spacing:0.18px">Revert</div>
<div class="sep" style="left:1062px;top:414px;height:21px"></div>
<svg style="left:1073px;top:417px" width="16" height="15"><use href="#histic"/></svg>
<div class="t" style="left:1092px;top:418px;letter-spacing:-0.10px">History</div>
<div class="b" style="left:940px;top:437px;width:546px;height:430px;background:#fbfbfb"></div>
<div class="b" style="left:940px;top:458px;width:544px;height:408px;background:#fff;border:1px solid #d9d9d9"></div>
<div class="b" style="left:990px;top:440px;width:46px;height:19px;background:#f0f0f0;border:1px solid #d0d0d0"></div>
<div class="b" style="left:940px;top:437px;width:51px;height:22px;background:#fff;border:1px solid #d9d9d9;border-bottom:none"></div>
<div class="s" style="left:948px;top:440px;letter-spacing:0.07px">Details</div>
<div class="s" style="left:996px;top:442px;letter-spacing:-0.21px">Survey</div>
<div class="b" style="left:1466px;top:462px;width:16px;height:402px;background:#f0f0f0"></div>
<div class="b" style="left:1466px;top:479px;width:15px;height:206px;background:#cdcdcd"></div>
<svg style="left:1470px;top:468px" width="8" height="6" viewBox="0 0 8 6"><path d="M0.700 5.300 L4 2 L7.300 5.300" fill="none" stroke="#505050" stroke-width="2"/></svg>
<svg style="left:1470px;top:852px" width="8" height="6" viewBox="0 0 8 6"><path d="M0.700 0.700 L4 4 L7.300 0.700" fill="none" stroke="#505050" stroke-width="2"/></svg>
<div class="s grp" style="left:947px;top:464px;letter-spacing:0.37px">PV - Coating damage</div>
<div class="b" style="left:1063px;top:473px;width:400px;height:1px;background:#d4d4d4"></div>
<div class="s" style="left:948px;top:491px;letter-spacing:0.31px">Length:</div>
<div class="t blue" style="left:993px;top:492px;letter-spacing:-0.10px">(?)(mm)</div>
<div class="inp" style="left:1060px;top:489px;width:354px">80</div>
<div class="s" style="left:948px;top:516px;letter-spacing:0.52px">Width:</div>
<div class="t blue" style="left:989px;top:517px;letter-spacing:-0.10px">(?)(mm)</div>
<div class="inp" style="left:1060px;top:514px;width:354px">15</div>
<div class="s" style="left:948px;top:541px;letter-spacing:-0.14px">Area:</div>
<div class="t blue" style="left:980px;top:542px;letter-spacing:-0.25px">(?)(cm2)</div>
<div class="inp" style="left:1060px;top:539px;width:354px">12</div>
<div class="s" style="left:948px;top:642px;letter-spacing:0.30px">Coating Breakdown:</div>
<div class="b" style="left:1060px;top:564px;width:354px;height:170px;background:#fff;border:1px solid #bdbdbd"></div>
<svg style="left:1066.0px;top:569.0px;overflow:hidden" width="151.0" height="147.0" viewBox="0 0 151.0 147.0">
<rect width="151.0" height="147.0" fill="#fff"/>
<g fill="#222"><circle cx="8.2" cy="19.7" r="7.3"/><circle cx="41.0" cy="10.0" r="4.4"/><circle cx="73.8" cy="4.4" r="6.8"/><circle cx="89.6" cy="12.4" r="7.3"/><circle cx="110.3" cy="10.4" r="7.8"/><circle cx="127.3" cy="6.1" r="4.4"/><circle cx="125.6" cy="21.4" r="6.6"/><circle cx="37.4" cy="26.2" r="7.3"/><circle cx="69.0" cy="23.8" r="7.3"/><circle cx="50.3" cy="37.7" r="7.3"/><circle cx="64.1" cy="42.0" r="3.9"/><circle cx="0.9" cy="36.0" r="5.3"/><circle cx="30.1" cy="54.2" r="6.8"/><circle cx="98.1" cy="45.7" r="6.8"/><circle cx="118.8" cy="53.7" r="7.3"/><circle cx="142.6" cy="51.8" r="6.8"/><circle cx="11.9" cy="70.0" r="6.8"/><circle cx="79.9" cy="68.8" r="7.3"/><circle cx="118.1" cy="69.3" r="3.9"/><circle cx="135.3" cy="75.6" r="7.3"/><circle cx="148.0" cy="68.3" r="2.9"/><circle cx="29.6" cy="79.7" r="7.3"/><circle cx="67.0" cy="77.3" r="3.9"/><circle cx="51.5" cy="87.0" r="7.3"/><circle cx="95.2" cy="90.6" r="7.3"/><circle cx="115.2" cy="83.3" r="7.3"/><circle cx="125.4" cy="97.2" r="7.3"/><circle cx="14.3" cy="106.9" r="3.9"/><circle cx="142.6" cy="108.1" r="7.3"/><circle cx="0.9" cy="105.2" r="4.4"/><circle cx="44.7" cy="117.9" r="7.8"/><circle cx="66.1" cy="115.4" r="3.9"/><circle cx="89.1" cy="112.0" r="7.3"/><circle cx="125.4" cy="112.0" r="4.4"/><circle cx="6.5" cy="119.8" r="7.8"/><circle cx="116.4" cy="127.6" r="7.3"/><circle cx="148.0" cy="124.7" r="4.4"/><circle cx="50.8" cy="136.8" r="6.8"/><circle cx="33.7" cy="140.9" r="3.9"/><circle cx="73.8" cy="143.6" r="6.1"/><circle cx="116.4" cy="143.6" r="6.1"/><circle cx="148.0" cy="140.5" r="3.4"/><circle cx="14.3" cy="9.2" r="1.5"/><circle cx="27.7" cy="25.0" r="1.2"/><circle cx="50.8" cy="25.0" r="1.5"/><circle cx="19.6" cy="38.9" r="1.9"/><circle cx="33.3" cy="37.7" r="1.2"/><circle cx="90.9" cy="25.0" r="1.5"/><circle cx="136.5" cy="20.2" r="1.7"/><circle cx="135.1" cy="10.9" r="1.2"/><circle cx="111.5" cy="18.9" r="1.7"/><circle cx="84.8" cy="48.8" r="1.7"/><circle cx="93.8" cy="55.9" r="1.2"/><circle cx="62.2" cy="62.7" r="1.2"/><circle cx="129.7" cy="45.7" r="1.5"/><circle cx="91.6" cy="73.6" r="1.2"/><circle cx="99.4" cy="75.6" r="1.7"/><circle cx="141.2" cy="63.9" r="1.9"/><circle cx="39.3" cy="92.6" r="1.7"/><circle cx="70.2" cy="102.1" r="1.9"/><circle cx="31.3" cy="114.5" r="1.2"/><circle cx="77.5" cy="116.2" r="1.9"/><circle cx="82.3" cy="129.5" r="1.7"/><circle cx="132.9" cy="128.3" r="1.2"/><circle cx="8.2" cy="138.8" r="1.9"/><circle cx="139.9" cy="139.7" r="1.9"/></g>
<rect x="1" y="1" width="149.0" height="145.0" fill="none" stroke="#000" stroke-width="2"/>
</svg>
<svg style="left:1227.0px;top:571.0px;overflow:hidden" width="145.0" height="142.0" viewBox="0 0 145.0 142.0">
<rect width="145.0" height="142.0" fill="#fff"/>
<g fill="#222"><circle cx="7.6" cy="1.6" r="4.4"/><circle cx="8.8" cy="18.6" r="7.3"/><circle cx="40.4" cy="8.9" r="3.9"/><circle cx="72.0" cy="3.6" r="6.1"/><circle cx="82.9" cy="11.4" r="6.3"/><circle cx="101.7" cy="8.9" r="6.8"/><circle cx="121.8" cy="5.5" r="3.9"/><circle cx="58.6" cy="18.6" r="8.5"/><circle cx="31.2" cy="25.5" r="6.3"/><circle cx="115.8" cy="20.1" r="6.3"/><circle cx="129.9" cy="31.5" r="8.5"/><circle cx="48.2" cy="35.2" r="6.8"/><circle cx="87.1" cy="35.7" r="6.8"/><circle cx="110.9" cy="34.0" r="6.8"/><circle cx="61.1" cy="40.0" r="3.4"/><circle cx="7.6" cy="32.7" r="3.4"/><circle cx="8.8" cy="48.5" r="8.5"/><circle cx="137.6" cy="48.5" r="6.1"/><circle cx="114.5" cy="51.5" r="6.8"/><circle cx="95.1" cy="57.0" r="7.8"/><circle cx="40.4" cy="57.5" r="6.3"/><circle cx="11.7" cy="66.8" r="6.3"/><circle cx="76.9" cy="65.1" r="7.3"/><circle cx="113.3" cy="65.5" r="3.9"/><circle cx="126.0" cy="72.1" r="6.8"/><circle cx="142.5" cy="64.8" r="2.4"/><circle cx="28.8" cy="75.8" r="6.8"/><circle cx="64.2" cy="73.6" r="3.4"/><circle cx="108.5" cy="80.1" r="7.3"/><circle cx="138.8" cy="85.0" r="7.3"/><circle cx="49.7" cy="83.0" r="6.8"/><circle cx="85.4" cy="85.5" r="6.3"/><circle cx="120.1" cy="92.8" r="6.8"/><circle cx="101.7" cy="98.8" r="7.3"/><circle cx="14.2" cy="102.0" r="3.4"/><circle cx="137.6" cy="103.2" r="6.8"/><circle cx="41.6" cy="106.1" r="6.8"/><circle cx="83.7" cy="106.1" r="6.8"/><circle cx="120.6" cy="107.3" r="3.9"/><circle cx="63.5" cy="110.0" r="3.4"/><circle cx="6.4" cy="115.4" r="7.3"/><circle cx="112.1" cy="121.4" r="6.8"/><circle cx="61.1" cy="123.4" r="6.3"/><circle cx="142.5" cy="120.2" r="3.4"/><circle cx="90.2" cy="129.5" r="8.5"/><circle cx="46.5" cy="132.4" r="6.3"/><circle cx="16.1" cy="136.8" r="7.8"/><circle cx="32.6" cy="134.8" r="3.4"/><circle cx="72.0" cy="138.5" r="6.8"/><circle cx="112.1" cy="137.2" r="6.3"/><circle cx="13.7" cy="8.9" r="1.5"/><circle cx="16.1" cy="34.7" r="1.5"/><circle cx="31.9" cy="35.7" r="1.2"/><circle cx="49.4" cy="23.8" r="1.7"/><circle cx="87.3" cy="23.8" r="1.2"/><circle cx="103.6" cy="18.2" r="1.5"/><circle cx="130.3" cy="9.7" r="1.2"/><circle cx="131.6" cy="18.6" r="1.5"/><circle cx="119.4" cy="44.9" r="1.9"/><circle cx="124.3" cy="43.7" r="1.2"/><circle cx="81.7" cy="46.1" r="1.5"/><circle cx="59.9" cy="60.2" r="1.2"/><circle cx="135.7" cy="61.2" r="1.5"/><circle cx="88.3" cy="70.4" r="1.2"/><circle cx="95.8" cy="72.8" r="1.7"/><circle cx="38.5" cy="88.6" r="1.5"/><circle cx="67.2" cy="97.1" r="1.7"/><circle cx="74.0" cy="110.5" r="1.7"/><circle cx="22.7" cy="108.8" r="1.0"/><circle cx="127.4" cy="123.1" r="1.2"/><circle cx="134.0" cy="134.1" r="1.7"/><circle cx="8.8" cy="132.4" r="1.5"/></g>
<rect x="1" y="1" width="143.0" height="140.0" fill="none" stroke="#000" stroke-width="2"/>
</svg>
<svg style="left:1383.0px;top:571.0px;overflow:hidden" width="12.0" height="143.0" viewBox="0 0 12.0 143.0">
<rect width="12.0" height="143.0" fill="#fff"/>
<g fill="#222"><circle cx="7.1" cy="3.6" r="3.6"/><circle cx="7.9" cy="20.6" r="5.3"/><circle cx="3.5" cy="34.0" r="4.4"/><circle cx="8.4" cy="48.5" r="7.3"/><circle cx="7.1" cy="66.8" r="5.3"/><circle cx="8.4" cy="88.6" r="8.5"/><circle cx="5.9" cy="116.6" r="6.8"/><circle cx="9.6" cy="136.0" r="2.4"/></g>
<path d="M12.0 1 H1 V142.0 H12.0" fill="none" stroke="#000" stroke-width="2"/>
</svg>
<div class="b" style="left:1113px;top:717px;width:60px;text-align:center;font-size:15px;line-height:16px;font-weight:bold;color:#111">25%</div>
<div class="b" style="left:1271px;top:712px;width:60px;text-align:center;font-size:15px;line-height:16px;font-weight:bold;color:#111">33%</div>
<svg style="left:1401px;top:647px" width="9" height="6"><use href="#chev"/></svg>
<div class="s" style="left:948px;top:742px;letter-spacing:0.34px">Corrosion Pitting:</div>
<div class="inp" style="left:1060px;top:740px;width:354px"></div>
<svg style="left:1401px;top:747px" width="9" height="6"><use href="#chevd"/></svg>
<div class="b" style="left:1059px;top:764px;width:356px;height:26px;background:#f0f0f0"></div>
<svg style="left:1064px;top:770px" width="16" height="14" viewBox="0 0 16 14"><rect x="0.800" y="0.800" width="14.400" height="12.400" rx="1" fill="none" stroke="#444" stroke-width="1.600"/><path d="M2.500 11.500 L6 7 L8.500 9.500 L10.500 7.500 L13.500 11.500 Z" fill="#444"/><path d="M5 2.500 A2 2 0 1 0 6.500 5.500 A1.600 1.600 0 0 1 5 2.500 Z" fill="#444"/></svg>
<svg style="left:1089px;top:775px" width="9" height="6"><use href="#chev"/></svg>
<svg style="left:1104px;top:769px" width="16" height="15"><use href="#editic"/></svg>
<svg style="left:1129px;top:772px" width="14" height="11" viewBox="0 0 14 11"><path d="M1.200 5.500 L5 9.300 L12.800 1.500" fill="none" stroke="#9a9a9a" stroke-width="3.200"/></svg>
<div class="s" style="left:1148px;top:770px;color:#8c8c8c;letter-spacing:-0.20px">Save Layer</div>
<svg style="left:1212px;top:769px" width="15" height="15" viewBox="0 0 15 15"><circle cx="6" cy="6" r="4.800" fill="none" stroke="#333" stroke-width="1.600"/><path d="M9.500 9.500 L14 14" stroke="#333" stroke-width="2.400"/><path d="M3.500 6 H8.500 M6 3.500 V8.500" stroke="#333" stroke-width="1.400"/></svg>
<div class="t" style="left:1231px;top:771px;letter-spacing:-0.23px">Zoom In</div>
<svg style="left:1280px;top:769px" width="15" height="15" viewBox="0 0 15 15"><circle cx="6" cy="6" r="4.800" fill="none" stroke="#333" stroke-width="1.600"/><path d="M9.500 9.500 L14 14" stroke="#333" stroke-width="2.400"/><path d="M3.500 6 H8.500" stroke="#333" stroke-width="1.400"/></svg>
<div class="t" style="left:1299px;top:771px;letter-spacing:-0.25px">Zoom Out</div>
<svg style="left:1059px;top:790px;overflow:hidden" width="356" height="73" viewBox="0 0 356 73">
<rect width="356" height="73" fill="#e6837d"/>
<g fill="none" stroke="#f4b4ae"><path d="M100 0 L112 50 M150 0 L146 58 M232 0 L238 22 M300 38 L310 73" stroke-width="4" opacity=".35"/><path d="M120 0 L130 62 M170 0 L160 60 M252 10 L300 0 M262 50 L272 73 M330 60 L356 48 M216 0 L224 14" stroke-width="1.500" opacity=".6"/></g>
<polygon points="245.0,18.7 258.3,30.9 269.3,62.5 264.4,72.9 254.7,72.9" fill="#e8e4e4"/>
<polygon points="113.7,72.9 123.5,56.4 140.5,48.4 147.8,56.4 159.9,72.9" fill="#86c49c" stroke="#e05a48" stroke-width="0.600"/>
<polygon points="123.5,56.4 140.5,48.4 147.8,56.4 136.8,67.3" fill="#a87858" opacity=".75"/>
<polygon points="178.1,72.9 183.0,69.3 193.9,30.4 215.8,6.6 255.9,27.9 262.0,72.9" fill="#82c098" stroke="#e05a48" stroke-width="0.600"/>
<ellipse cx="227.9" cy="51.5" rx="10" ry="19" fill="#8d9c5c" opacity=".8"/>
<circle cx="123.5" cy="56.4" r="2.500" fill="none" stroke="#e05a48" stroke-width="0.800"/>
<circle cx="140.5" cy="48.4" r="2.500" fill="none" stroke="#e05a48" stroke-width="0.800"/>
<circle cx="183.0" cy="69.3" r="2.500" fill="none" stroke="#e05a48" stroke-width="0.800"/>
<circle cx="193.9" cy="30.4" r="2.500" fill="none" stroke="#e05a48" stroke-width="0.800"/>
<circle cx="215.8" cy="6.6" r="2.500" fill="none" stroke="#e05a48" stroke-width="0.800"/>
<circle cx="255.9" cy="27.9" r="2.500" fill="none" stroke="#e05a48" stroke-width="0.800"/>
</svg>
<div class="b" style="left:940px;top:867px;width:76px;height:21px;background:#fbfbfb"></div>
<div class="s" style="left:946px;top:870px;color:#333">Event Deta...</div>
<div class="b" style="left:1016px;top:867px;width:1px;height:21px;background:#cfcfcf"></div>
<div class="s g" style="left:1023px;top:870px;letter-spacing:-0.48px">Task</div>
</body>
</html>
